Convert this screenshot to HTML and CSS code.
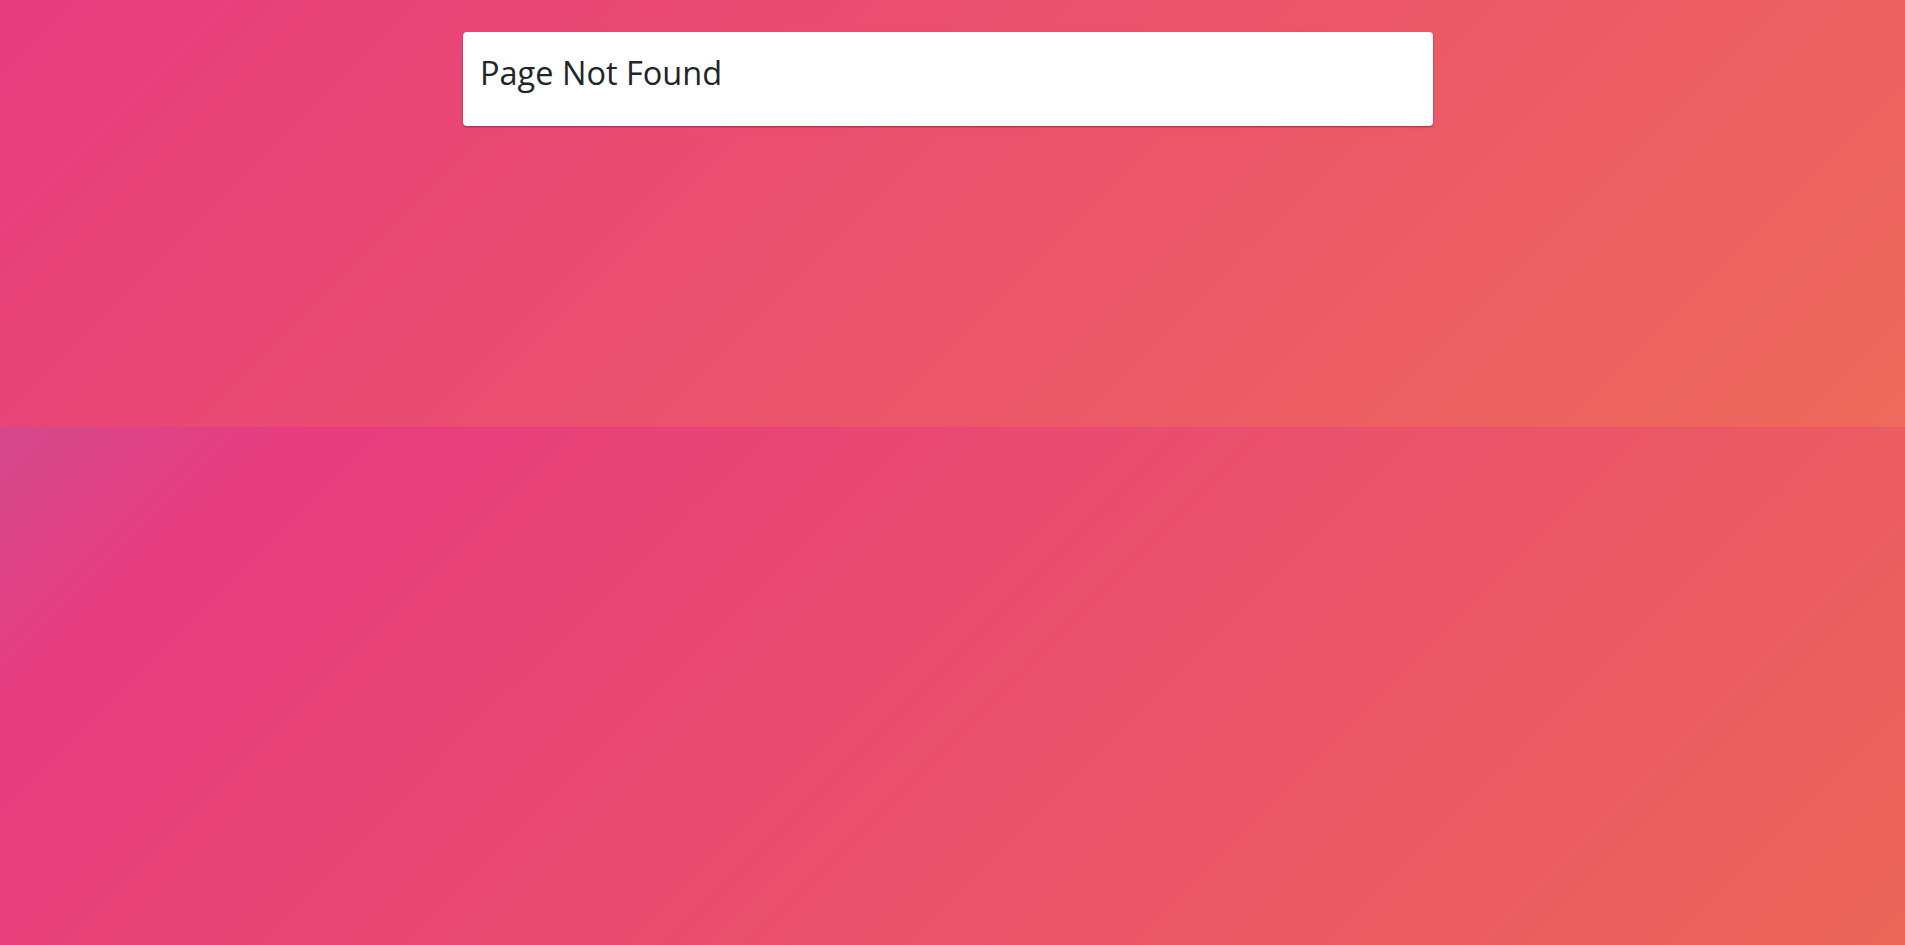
FILE: index.html
```html
<!DOCTYPE html>
<html lang="en">
<head>
<meta charset="utf-8">
<title>Page Not Found</title>
<link rel="stylesheet" href="styles.css">
</head>
<body>
  <div class="page">
    <section class="hero">
      <div class="card">
        <h2 class="card-title">Page Not Found</h2>
      </div>
    </section>
    <div class="filler"></div>
  </div>
</body>
</html>
```

FILE: styles.css
```css
html, body {
  margin: 0;
  padding: 0;
  height: 100%;
}

body {
  font-family: "Open Sans", "Noto Sans", "Liberation Sans", sans-serif;
  color: #212529;
}

.page {
  display: flex;
  flex-direction: column;
  min-height: 100vh;
}

.hero {
  height: 427px;
  box-sizing: border-box;
  padding: 32px 0 0 463px;
  background: linear-gradient(135deg, #e73c7e 0%, #ee6a5b 100%);
}

.filler {
  flex: 1;
  background: linear-gradient(135deg, #d4498b 0%, #e73c7e 12.5%, #ec6659 100%);
}

.card {
  width: 970px;
  height: 94px;
  box-sizing: border-box;
  background: #fff;
  border-radius: 4px;
  box-shadow: 0 1px 2px rgba(60, 0, 20, 0.45);
  padding: 22px 16px 0 17px;
}

.card-title {
  margin: 0;
  font-size: 32.5px;
  font-weight: 400;
  line-height: 38px;
  color: #212529;
}
```
